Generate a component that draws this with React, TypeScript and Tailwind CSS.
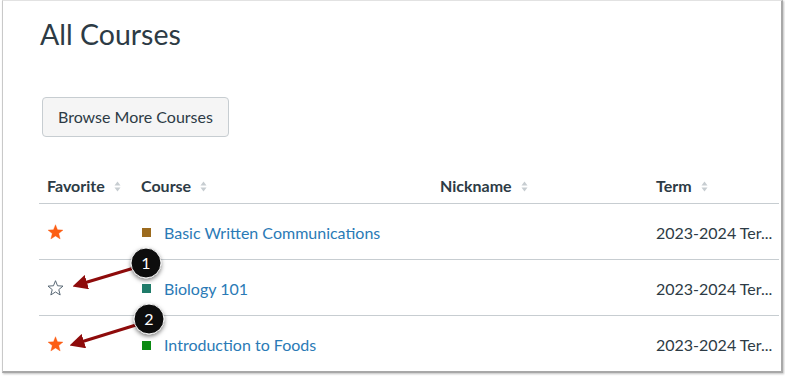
const courses = [
  { fav: true, color: "#9c6b1e", name: "Basic Written Communications", term: "2023-2024 Ter..." },
  { fav: false, color: "#1f7b69", name: "Biology 101", term: "2023-2024 Ter..." },
  { fav: true, color: "#0b8a12", name: "Introduction to Foods", term: "2023-2024 Ter..." },
];

function SortIcon() {
  return (
    <svg width="7" height="11" viewBox="0 0 7 11" className="ml-[9px]">
      <path d="M3.5 0.5 L6.5 4.5 L0.5 4.5 Z" fill="#c7cdd1" />
      <path d="M3.5 10.5 L6.5 6.5 L0.5 6.5 Z" fill="#c7cdd1" />
    </svg>
  );
}

function Star({ filled }: { filled: boolean }) {
  return (
    <svg width="17" height="16" viewBox="0 0 24 23">
      <path
        d="M12 1 L14.9 8.3 L22.8 8.8 L16.7 13.8 L18.7 21.5 L12 17.2 L5.3 21.5 L7.3 13.8 L1.2 8.8 L9.1 8.3 Z"
        fill={filled ? "#fc5e13" : "none"}
        stroke={filled ? "#fc5e13" : "#556572"}
        strokeWidth={filled ? 0.5 : 1.4}
        strokeLinejoin="round"
      />
    </svg>
  );
}

const cols = "grid grid-cols-[94px_299px_216px_130px]";

export default function App() {
  return (
    <div className="relative h-[377px] w-[785px] overflow-hidden bg-white font-['Lato','Liberation_Sans',sans-serif] text-[#2d3b45]">
      <div className="ml-[2px] h-[373px] w-[781px] border-l border-t border-r-2 border-b-2 border-l-[#c9c9c9] border-t-[#e2e2e2] border-r-[#a8a8a8] border-b-[#a8a8a8] shadow-[1px_1px_2px_rgba(0,0,0,0.25)]">
        <h1 className="ml-[37px] mt-[15px] text-[28.5px] leading-[36px] font-normal">All Courses</h1>

        <button
          type="button"
          className="ml-[39px] mt-[45px] h-[40px] rounded-[4px] border border-[#c7cdd1] bg-[#f5f5f5] px-[15px] text-[16px] text-[#2d3b45]"
        >
          Browse More Courses
        </button>

        <div className="ml-[36px] mt-[32px] w-[740px]">
          <div className={`${cols} h-[35px] items-start border-b border-[#c7cdd1] pt-[7px] text-[16px] font-bold`}>
            {["Favorite", "Course", "Nickname", "Term"].map((h) => (
              <div key={h} className="flex items-center pl-[8px] leading-[20px]">
                {h}
                <SortIcon />
              </div>
            ))}
          </div>
          {courses.map((c, i) => (
            <div
              key={c.name}
              className={`${cols} h-[56px] items-center text-[16px] ${i < courses.length - 1 ? "border-b border-[#c7cdd1]" : ""}`}
            >
              <div className="flex items-center pl-[8px]">
                <Star filled={c.fav} />
              </div>
              <div className="flex items-center pl-[9px]">
                <span className="mr-[13px] mt-[2px] h-[9px] w-[9px]" style={{ backgroundColor: c.color }} />
                <span className="mt-[2px] text-[#2a7ab6]">{c.name}</span>
              </div>
              <div />
              <div className="mt-[2px] whitespace-nowrap pl-[8px]">{c.term}</div>
            </div>
          ))}
        </div>
      </div>

      {/* callouts */}
      <svg className="pointer-events-none absolute inset-0" width="785" height="377">
        <defs>
          <marker id="head" markerWidth="5" markerHeight="5" refX="1" refY="2.5" orient="auto" markerUnits="strokeWidth">
            <path d="M0 0 L5 2.5 L0 5 Z" fill="#8e0b0b" />
          </marker>
          <filter id="sh" x="-50%" y="-50%" width="200%" height="200%">
            <feDropShadow dx="0" dy="2" stdDeviation="2" floodColor="#000" floodOpacity="0.5" />
          </filter>
        </defs>
        <line x1="134" y1="268" x2="84" y2="283" stroke="#8e0b0b" strokeWidth="3" markerEnd="url(#head)" />
        <line x1="136" y1="325" x2="81" y2="342" stroke="#8e0b0b" strokeWidth="3" markerEnd="url(#head)" />
        <g filter="url(#sh)">
          <circle cx="146" cy="263" r="15" fill="#111" stroke="#f2f2f2" strokeWidth="1" />
          <circle cx="149" cy="319" r="15" fill="#111" stroke="#f2f2f2" strokeWidth="1" />
        </g>
        <text x="146" y="269" textAnchor="middle" fill="#fff" fontSize="16" fontFamily="Lato, sans-serif">1</text>
        <text x="149" y="325" textAnchor="middle" fill="#fff" fontSize="16" fontFamily="Lato, sans-serif">2</text>
      </svg>
    </div>
  );
}
